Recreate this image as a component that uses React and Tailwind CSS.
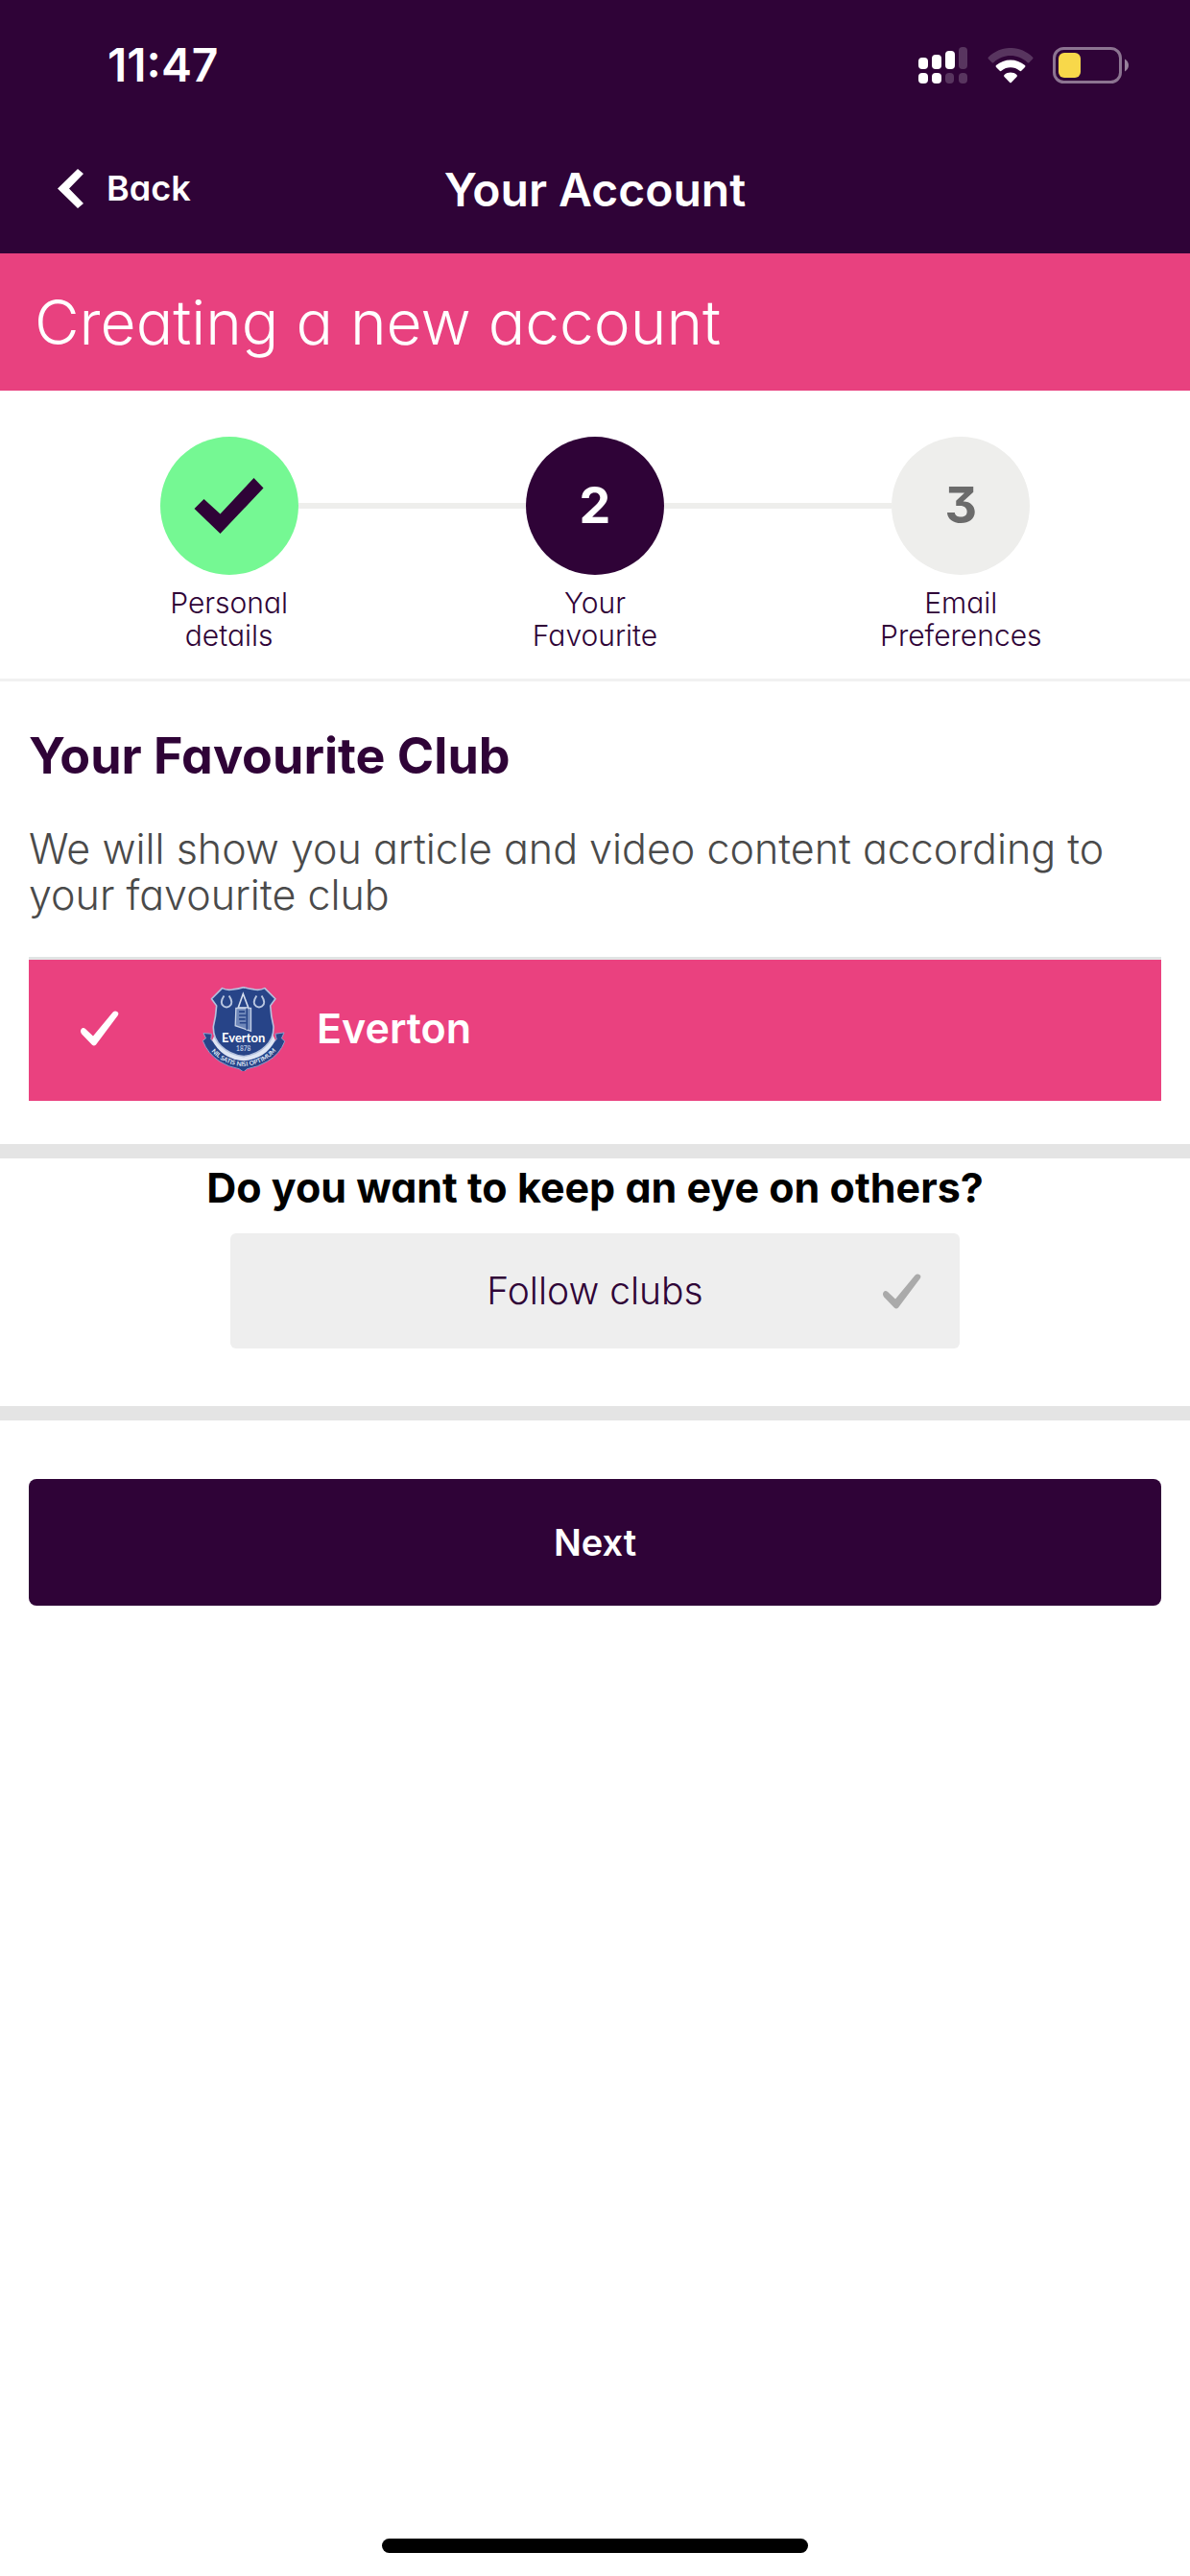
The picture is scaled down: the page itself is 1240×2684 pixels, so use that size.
function SignalIcon() {
  return (
    <svg width="52" height="38" viewBox="0 0 52 38" fill="#fff" aria-label="Signal strength" role="img">
      <rect x="0" y="11" width="10" height="12" rx="4" />
      <rect x="14" y="8" width="10" height="15" rx="4" />
      <rect x="28" y="4" width="10" height="19" rx="4" />
      <rect x="42" y="0" width="9" height="23" rx="4" opacity=".2" />
      <rect x="0" y="27" width="10" height="11" rx="4" />
      <rect x="14" y="27" width="10" height="11" rx="4" />
      <rect x="28" y="27" width="9" height="11" rx="4" opacity=".2" />
      <rect x="42" y="27" width="9" height="11" rx="4" opacity=".2" />
    </svg>
  );
}

function WifiIcon() {
  return (
    <svg width="48" height="37" viewBox="0 0 48 37" fill="#fff" aria-label="Wi-Fi" role="img">
      <path opacity=".2" d="M1 9.500C14-3.200 34-3.200 47 9.500q1 1 0 2l-3.500 3.500q-1 1-2 0C31.500 5.800 16.500 5.800 6.500 15q-1 1-2 0L1 11.500q-1-1 0-2z" />
      <path d="M9 18C17.500 10.500 30.500 10.500 39 18q1 1 0 2l-3.500 3.600q-1 1-2 .1c-5.500-4.600-13.500-4.600-19 0q-1 .9-2-.1L9 20q-1-1 0-2z" />
      <path d="M17.500 28c3.700-3.200 9.300-3.200 13 0q1 .9 0 2l-5.500 5.700q-1 1-2 0L17.500 30q-1-1.100 0-2z" />
    </svg>
  );
}

function BatteryIcon() {
  return (
    <svg width="79" height="38" viewBox="0 0 79 38" fill="none" aria-label="Battery" role="img">
      <rect x="1.500" y="1.500" width="69" height="35" rx="10" stroke="#fff" strokeOpacity=".45" strokeWidth="3" />
      <rect x="6" y="6" width="23" height="26" rx="6" fill="#f8d84a" />
      <path d="M75 12.500c2.500 1.500 4 3.800 4 6.500s-1.500 5-4 6.500z" fill="#fff" fillOpacity=".5" />
    </svg>
  );
}

function StepCheck() {
  return (
    <svg width="73" height="58" viewBox="0 0 73 58" fill="#2f0337" aria-hidden="true">
      <polygon points="0.500,32 10.500,22 27.500,37.500 62.500,0 72.500,10.500 27.500,58" />
    </svg>
  );
}

function TickIcon({ className }) {
  return (
    <svg width="40" height="37" viewBox="0 0 40 37" className={className} fill="currentColor" aria-hidden="true">
      <path d="M0.500 19.500Q2.500 17 5 19L13 26.500 33.500 1.800Q35.500-.3 38 .9 40.300 2.400 38.800 5L16 35.500Q14 37.700 11.800 35.500L1.200 24.500Q-.8 22 .5 19.500z" />
    </svg>
  );
}

function EvertonCrest() {
  return (
    <svg width="88" height="88" viewBox="60 53 270 270" aria-label="Everton crest" role="img">
      <path d="M66 202l26 2-2 18 18 18q36 46 86 48 52-2 88-48l18-18-4-18 28-4-8 18 10 10q-16 42-56 64-30 18-64 24l-12 10-14-10q-34-6-62-24-38-24-54-66l10-8z" fill="#274488" stroke="#8fa0cc" strokeWidth="3" />
      <path d="M94 224q30 60 100 66 72-6 102-66l-8-16H102z" fill="#dfe6f4" />
      <path d="M92 92l34-34q16 8 34 4 18-2 34-7 16 5 34 7 18 4 34-4l34 34-16 22q2 34 10 66 2 40-26 64-26 26-70 32-44-6-70-32-28-24-26-64 8-32 10-66z" fill="#274488" stroke="#b4c1de" strokeWidth="5" strokeLinejoin="round" />
      <g fill="none" stroke="#b9c6e0" strokeWidth="6">
        <path d="M132 82q-16 24-1 34 9 6 18 0 15-10-1-34" />
        <path d="M236 82q-16 24-1 34 9 6 18 0 15-10-1-34" />
      </g>
      <path d="M193 76l-16 45h33z" fill="#274488" stroke="#d5deee" strokeWidth="5" />
      <path d="M170 122h48v73l-50-17z" fill="#6f87b9" stroke="#c5d0e6" strokeWidth="4" />
      <path d="M205 122v68M180 133h18M180 145h22M180 157h20M182 169h20" stroke="#274488" strokeWidth="5" />
      <text x="194" y="230" textAnchor="middle" fill="#fff" className="font-[Lato,sans-serif] text-[40px] font-bold">Everton</text>
      <text x="194" y="258" textAnchor="middle" fill="#b9c6e0" className="font-[Lato,sans-serif] text-[20px] font-bold">1878</text>
      <path id="motto" d="M76 238q38 64 118 70 84-8 120-72" fill="none" />
      <text fill="#dfe6f4" className="font-[Lato,sans-serif] text-[20px] font-bold">
        <textPath href="#motto" startOffset="50%" textAnchor="middle">NIL SATIS NISI OPTIMUM</textPath>
      </text>
    </svg>
  );
}

const steps = [
  { mark: <StepCheck />, lines: ["Personal", "details"], circle: "bg-[#75f893]", left: "bg-transparent", right: "bg-[#eeeeec]" },
  { mark: "2", lines: ["Your", "Favourite"], circle: "bg-[#2f0337] text-white", left: "bg-[#eeeeec]", right: "bg-[#eeeeec]" },
  { mark: "3", lines: ["Email", "Preferences"], circle: "bg-[#eeeeec] text-[#6b6b6b]", left: "bg-[#eeeeec]", right: "bg-transparent" },
];

export default function App() {
  return (
    <div className="flex min-h-screen flex-col bg-white font-[Inter,sans-serif] text-[#2f0337] [font-feature-settings:'cv11','cv09']">
      <header className="bg-[#2f0337] text-white">
        <div className="flex h-34 items-center justify-between pr-16 pl-28">
          <span className="text-5xl font-semibold">11:47</span>
          <div className="flex items-center gap-5">
            <SignalIcon />
            <WifiIcon />
            <BatteryIcon />
          </div>
        </div>
        <nav className="grid h-32 grid-cols-[1fr_auto_1fr] items-center">
          <button type="button" className="flex items-center gap-6 justify-self-start pb-2 pl-15 text-4xl font-semibold">
            <svg width="27" height="41" viewBox="0 0 27 41" fill="currentColor" aria-hidden="true">
              <polygon points="0,20.500 21,0 27,5 12,20.500 27,36 21,41" />
            </svg>
            Back
          </button>
          <h1 className="pb-1 text-5xl font-semibold">Your Account</h1>
        </nav>
      </header>

      <div className="flex h-[143px] items-center bg-[#e8417f] px-9">
        <h2 className="text-[64px] leading-none font-light text-white">Creating a new account</h2>
      </div>

      <ol className="grid grid-cols-3 border-b-3 border-[#f1f1f1] px-12 pt-12 pb-7">
        {steps.map((step) => (
          <li key={step.lines[0]} className="flex flex-col items-center">
            <div className="flex w-full items-center">
              <span className={`h-1.5 flex-1 ${step.left}`} />
              <span className={`flex size-36 items-center justify-center rounded-full text-[52px] font-bold ${step.circle}`}>
                {step.mark}
              </span>
              <span className={`h-1.5 flex-1 ${step.right}`} />
            </div>
            <span className="mt-3 text-center text-3xl leading-[34px] font-light">
              {step.lines[0]}
              <br />
              {step.lines[1]}
            </span>
          </li>
        ))}
      </ol>

      <main className="flex flex-1 flex-col">
        <section className="border-b-15 border-[#e4e4e4] px-[30px] pt-12 pb-[45px]">
          <h2 className="text-[52px] leading-[60px] font-bold">Your Favourite Club</h2>
          <p className="mt-[42px] text-[43px] leading-12 font-light text-[#4a4a4a]">
            We will show you article and video content according to your favourite club
          </p>
          <button
            type="button"
            aria-pressed="true"
            className="mt-[41px] flex h-[150px] w-full items-center border-t-3 border-[#e1e4e4] bg-[#ea417f] pb-1 pl-[54px] text-[43px] font-semibold text-white"
          >
            <TickIcon />
            <span className="mr-8 ml-[86px]">
              <EvertonCrest />
            </span>
            Everton
          </button>
        </section>

        <section className="flex flex-col items-center border-b-15 border-[#e4e4e4] pb-15">
          <h2 className="text-[43px] leading-[60px] font-bold text-black">Do you want to keep an eye on others?</h2>
          <button
            type="button"
            className="mt-[18px] grid h-30 w-[760px] max-w-full grid-cols-[1fr_auto_1fr] items-center rounded-md bg-[#eee] px-10 text-[39px] font-light"
          >
            <span className="col-start-2">Follow clubs</span>
            <TickIcon className="justify-self-end text-[#aaa]" />
          </button>
        </section>

        <div className="px-[30px] pt-[61px]">
          <button type="button" className="h-33 w-full rounded-lg bg-[#2f0337] text-[38px] font-semibold text-white">
            Next
          </button>
        </div>
      </main>

      <div className="mx-auto mb-6 h-[15px] w-111 rounded-full bg-black" />
    </div>
  );
}
